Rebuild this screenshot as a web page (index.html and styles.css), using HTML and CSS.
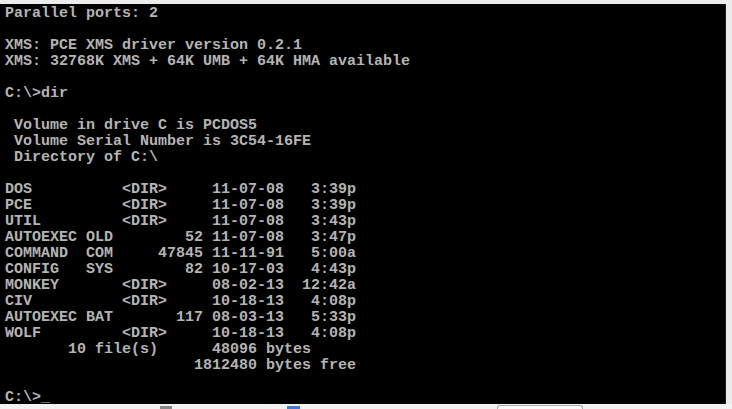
FILE: index.html
```html
<!DOCTYPE html>
<html>
<head>
<meta charset="utf-8">
<link rel="stylesheet" href="styles.css">
</head>
<body>
<div class="frame">
  <div class="screen">
<pre class="console">Parallel ports: 2

XMS: PCE XMS driver version 0.2.1
XMS: 32768K XMS + 64K UMB + 64K HMA available

C:\&gt;dir

 Volume in drive C is PCDOS5
 Volume Serial Number is 3C54-16FE
 Directory of C:\

DOS          &lt;DIR&gt;     11-07-08   3:39p
PCE          &lt;DIR&gt;     11-07-08   3:39p
UTIL         &lt;DIR&gt;     11-07-08   3:43p
AUTOEXEC OLD        52 11-07-08   3:47p
COMMAND  COM     47845 11-11-91   5:00a
CONFIG   SYS        82 10-17-03   4:43p
MONKEY       &lt;DIR&gt;     08-02-13  12:42a
CIV          &lt;DIR&gt;     10-18-13   4:08p
AUTOEXEC BAT       117 08-03-13   5:33p
WOLF         &lt;DIR&gt;     10-18-13   4:08p
       10 file(s)      48096 bytes
                     1812480 bytes free

C:\&gt;_</pre>
  </div>
  <div class="taskbar">
    <span class="tb-icon tb-gray"></span>
    <span class="tb-icon tb-blue"></span>
    <span class="tb-box"></span>
  </div>
</div>
</body>
</html>
```
FILE: styles.css
```css
html, body {
  margin: 0;
  padding: 0;
  background: #ececec;
  overflow: hidden;
}
.frame {
  width: 732px;
  height: 409px;
  padding-top: 4px;
  box-sizing: border-box;
  display: flex;
  flex-direction: column;
}
.screen {
  width: 726px;
  height: 400px;
  background: #000;
  overflow: hidden;
  border-right: 1px solid #1a1a1a;
  box-sizing: border-box;
  flex: none;
}
.console {
  margin: 0;
  padding: 2px 0 0 5px;
  font-family: "Liberation Mono", monospace;
  font-size: 15px;
  line-height: 16px;
  font-weight: bold;
  color: #b4b4b4;
  white-space: pre;
}
.taskbar {
  height: 5px;
  display: flex;
  align-items: flex-start;
  background: #f2f2f2;
}
.tb-icon {
  width: 12px;
  height: 3px;
  margin-top: 2px;
}
.tb-gray {
  margin-left: 160px;
  background: #8a8a8a;
}
.tb-blue {
  margin-left: 115px;
  background: #3d7fd6;
  width: 13px;
}
.tb-box {
  margin-left: 197px;
  width: 86px;
  height: 4px;
  margin-top: 1px;
  border: 1px solid #a8a8a8;
  border-bottom: none;
  border-radius: 3px 3px 0 0;
  box-sizing: border-box;
  background: #fafafa;
}
```
